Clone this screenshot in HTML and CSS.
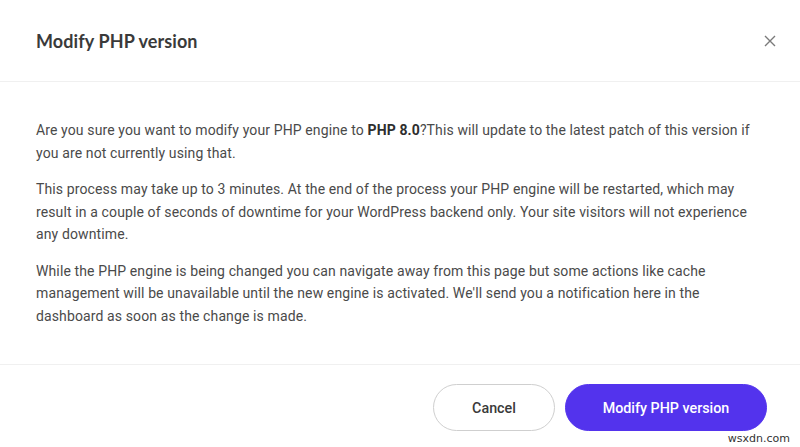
FILE: index.html
```html
<!DOCTYPE html>
<html lang="en">
<head>
    <meta charset="UTF-8">
    <meta name="viewport" content="width=device-width, initial-scale=1.0">
    <title>Modify PHP version</title>
    <link rel="stylesheet" href="styles.css">
</head>
<body>
    <div class="modal">
        <div class="modal-header">
            <h1 class="modal-title">Modify PHP version</h1>
            <button class="close-btn" aria-label="Close">
                <svg width="12" height="12" viewBox="0 0 12 12">
                    <path d="M1 1 L11 11 M11 1 L1 11" stroke="#7a7a7a" stroke-width="1.4" fill="none"/>
                </svg>
            </button>
        </div>
        <div class="modal-body">
            <p>Are you sure you want to modify your PHP engine to <strong>PHP 8.0</strong>?This will update to the latest patch of this version if you are not currently using that.</p>
            <p>This process may take up to 3 minutes. At the end of the process your PHP engine will be restarted, which may result in a couple of seconds of downtime for your WordPress backend only. Your site visitors will not experience any downtime.</p>
            <p>While the PHP engine is being changed you can navigate away from this page but some actions like cache management will be unavailable until the new engine is activated. We'll send you a notification here in the dashboard as soon as the change is made.</p>
        </div>
        <div class="modal-footer">
            <button type="button" class="btn btn-cancel">Cancel</button>
            <button type="button" class="btn btn-primary">Modify PHP version</button>
        </div>
        <div class="watermark">wsxdn.com</div>
    </div>
</body>
</html>
```

FILE: styles.css
```css
body {
    margin: 0;
    background-color: #fff;
    font-family: Roboto, "Liberation Sans", sans-serif;
    color: #4a4a4a;
}

.modal {
    position: relative;
    width: 800px;
    height: 447px;
    overflow: hidden;
}

.modal-header {
    display: flex;
    justify-content: space-between;
    align-items: center;
    height: 81px;
    padding: 0 22px 0 36px;
    border-bottom: 1px solid #f0f0f0;
}

.modal-title {
    margin: 0;
    font-family: Lato, "Open Sans", sans-serif;
    font-size: 18px;
    font-weight: 700;
    color: #3a3a3a;
    letter-spacing: 0.1px;
}

.close-btn {
    background: none;
    border: none;
    padding: 0;
    width: 16px;
    height: 16px;
    display: flex;
    align-items: center;
    justify-content: center;
    cursor: pointer;
}

.modal-body {
    height: 283px;
    box-sizing: border-box;
    padding: 37px 36px 0 36px;
    border-bottom: 1px solid #f0f0f0;
}

.modal-body p {
    margin: 0 0 14px;
    font-size: 14px;
    line-height: 22.5px;
    letter-spacing: 0.12px;
}

.modal-body strong {
    color: #2e2e2e;
}

.modal-footer {
    display: flex;
    justify-content: flex-end;
    gap: 10px;
    padding: 19px 33px 0 0;
}

.btn {
    height: 47px;
    border-radius: 24px;
    font-family: Roboto, "Liberation Sans", sans-serif;
    font-size: 14.3px;
    font-weight: 500;
    cursor: pointer;
}

.btn-cancel {
    width: 122px;
    background: #fff;
    border: 1px solid #cfcfcf;
    color: #3a3a3a;
}

.btn-primary {
    width: 202px;
    background: #5333ed;
    border: 1px solid #5333ed;
    color: #fff;
}

.watermark {
    position: absolute;
    right: 10px;
    bottom: 2px;
    font-family: "DejaVu Sans", sans-serif;
    font-size: 11px;
    color: #333;
}
```
